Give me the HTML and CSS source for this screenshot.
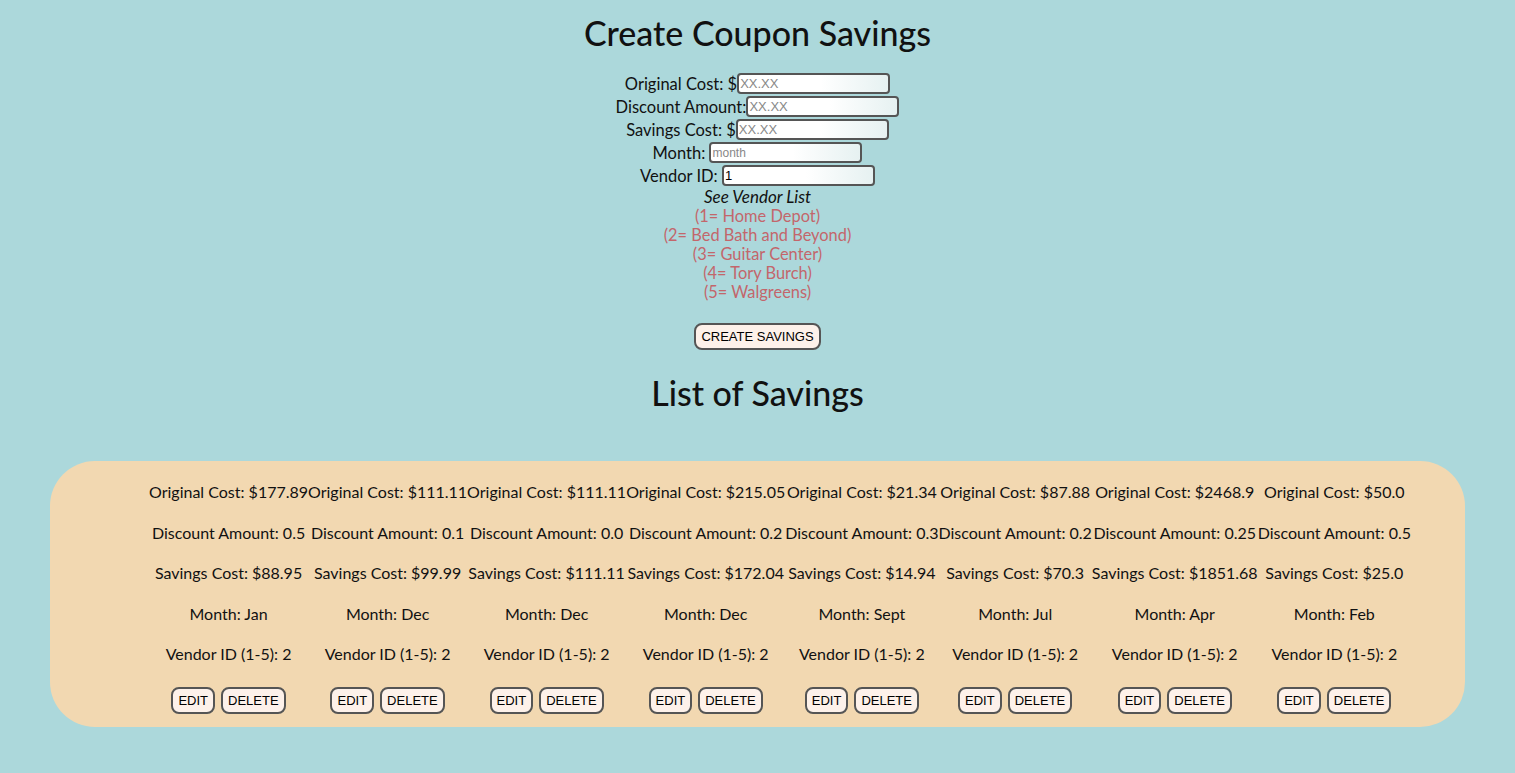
FILE: index.html
```html
<!DOCTYPE html>
<html lang="en">
<head>
<meta charset="UTF-8" />
<title>Coupon Savings</title>
<link rel="stylesheet" href="styles.css">
</head>
<body>

<h1 class="page-title">Create Coupon Savings</h1>

<form class="coupon-form" onsubmit="event.preventDefault();">
    <div class="field"><label>Original Cost: $</label><input type="text" placeholder="XX.XX"></div>
    <div class="field"><label>Discount Amount:</label><input type="text" placeholder="XX.XX"></div>
    <div class="field"><label>Savings Cost: $</label><input type="text" placeholder="XX.XX"></div>
    <div class="field"><label>Month: </label><input type="text" class="small-ph" placeholder="month"></div>
    <div class="field"><label>Vendor ID: </label><input type="text" value="1"></div>

    <p class="vendor-title">See Vendor List</p>
    <ul class="vendor-list">
        <li>(1= Home Depot)</li>
        <li>(2= Bed Bath and Beyond)</li>
        <li>(3= Guitar Center)</li>
        <li>(4= Tory Burch)</li>
        <li>(5= Walgreens)</li>
    </ul>

    <button type="submit" class="btn create-btn">CREATE SAVINGS</button>
</form>

<h1 class="page-title list-title">List of Savings</h1>

<div class="savings-card">
    <div class="saving">
        <p>Original Cost: $177.89</p>
        <p>Discount Amount: 0.5</p>
        <p>Savings Cost: $88.95</p>
        <p>Month: Jan</p>
        <p>Vendor ID (1-5): 2</p>
        <div class="actions"><button class="btn">EDIT</button><button class="btn">DELETE</button></div>
    </div>
    <div class="saving">
        <p>Original Cost: $111.11</p>
        <p>Discount Amount: 0.1</p>
        <p>Savings Cost: $99.99</p>
        <p>Month: Dec</p>
        <p>Vendor ID (1-5): 2</p>
        <div class="actions"><button class="btn">EDIT</button><button class="btn">DELETE</button></div>
    </div>
    <div class="saving">
        <p>Original Cost: $111.11</p>
        <p>Discount Amount: 0.0</p>
        <p>Savings Cost: $111.11</p>
        <p>Month: Dec</p>
        <p>Vendor ID (1-5): 2</p>
        <div class="actions"><button class="btn">EDIT</button><button class="btn">DELETE</button></div>
    </div>
    <div class="saving">
        <p>Original Cost: $215.05</p>
        <p>Discount Amount: 0.2</p>
        <p>Savings Cost: $172.04</p>
        <p>Month: Dec</p>
        <p>Vendor ID (1-5): 2</p>
        <div class="actions"><button class="btn">EDIT</button><button class="btn">DELETE</button></div>
    </div>
    <div class="saving">
        <p>Original Cost: $21.34</p>
        <p>Discount Amount: 0.3</p>
        <p>Savings Cost: $14.94</p>
        <p>Month: Sept</p>
        <p>Vendor ID (1-5): 2</p>
        <div class="actions"><button class="btn">EDIT</button><button class="btn">DELETE</button></div>
    </div>
    <div class="saving">
        <p>Original Cost: $87.88</p>
        <p>Discount Amount: 0.2</p>
        <p>Savings Cost: $70.3</p>
        <p>Month: Jul</p>
        <p>Vendor ID (1-5): 2</p>
        <div class="actions"><button class="btn">EDIT</button><button class="btn">DELETE</button></div>
    </div>
    <div class="saving">
        <p>Original Cost: $2468.9</p>
        <p>Discount Amount: 0.25</p>
        <p>Savings Cost: $1851.68</p>
        <p>Month: Apr</p>
        <p>Vendor ID (1-5): 2</p>
        <div class="actions"><button class="btn">EDIT</button><button class="btn">DELETE</button></div>
    </div>
    <div class="saving">
        <p>Original Cost: $50.0</p>
        <p>Discount Amount: 0.5</p>
        <p>Savings Cost: $25.0</p>
        <p>Month: Feb</p>
        <p>Vendor ID (1-5): 2</p>
        <div class="actions"><button class="btn">EDIT</button><button class="btn">DELETE</button></div>
    </div>
</div>

</body>
</html>
```

FILE: styles.css
```css
body {
    font-family: Lato, 'Open Sans', sans-serif;
    background: #acd8db;
    color: #111;
    margin: 0;
    padding: 12px 0 40px 0;
    text-align: center;
}
.page-title {
    font-size: 34px;
    font-weight: 500;
    margin: 0;
    line-height: 42px;
}
.coupon-form {
    margin-top: 18px;
    font-size: 16.5px;
}
.field {
    display: flex;
    justify-content: center;
    align-items: center;
    height: 23px;
}
.field label {
    white-space: pre;
}
.field input {
    width: 153px;
    height: 21px;
    box-sizing: border-box;
    border: 2px solid #555;
    border-radius: 4px;
    padding: 0 1px;
    font-family: 'Liberation Sans', Arial, sans-serif;
    font-size: 13px;
    color: #000;
    background: linear-gradient(90deg, #fff 0%, #fff 55%, #e6f1f1 100%);
    outline: none;
}
.field input::placeholder {
    color: #888;
}
.field input.small-ph::placeholder {
    font-size: 12px;
}
.vendor-title {
    font-style: italic;
    margin: 0;
    line-height: 19px;
    font-size: 17px;
}
.vendor-list {
    list-style: none;
    margin: 0;
    padding: 0;
    color: #c3666b;
    font-size: 16.4px;
    line-height: 19px;
}
.btn {
    font-family: 'Liberation Sans', Arial, sans-serif;
    font-size: 13px;
    color: #000;
    background: #fdf1ea;
    border: 2px solid #555;
    border-radius: 8px;
    height: 27px;
    padding: 0 5px;
    cursor: pointer;
}
.create-btn {
    margin-top: 22px;
}
.list-title {
    margin-top: 22px;
}
.savings-card {
    background: #f2d8b1;
    border-radius: 45px;
    margin: 47px 50px 0 50px;
    padding: 11px 10px 13px 55px;
    display: flex;
    justify-content: center;
    font-size: 16px;
}
.saving p {
    margin: 0;
    line-height: 40.5px;
    white-space: nowrap;
}
.actions {
    display: flex;
    justify-content: center;
    gap: 6px;
    margin-top: 12px;
}
```
